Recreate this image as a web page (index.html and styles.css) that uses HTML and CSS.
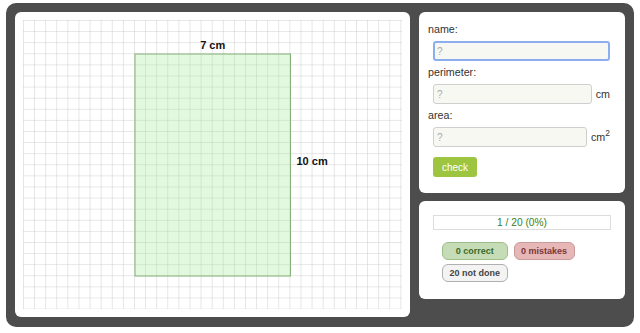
FILE: index.html
```html
<!DOCTYPE html>
<html lang="en">
<head>
    <meta charset="UTF-8">
    <meta name="viewport" content="width=device-width, initial-scale=1.0">
    <title>Rectangle Quiz</title>
    <link rel="stylesheet" href="styles.css">
</head>
<body>
    <div class="frame">
        <div class="canvas-panel">
            <svg class="board" width="380" height="290" viewBox="0 0 380 290">
                <defs>
                    <pattern id="grid" width="11.1" height="11.1" patternUnits="userSpaceOnUse">
                        <path d="M 11.1 0 L 0 0 0 11.1" fill="none" stroke="#cdcdcd" stroke-width="1"/>
                    </pattern>
                </defs>
                <rect x="0" y="0" width="379" height="289" fill="url(#grid)"/>
                <rect x="112" y="34" width="155.5" height="222" class="shape"/>
                <text x="189.7" y="28.5" class="dim" text-anchor="middle">7 cm</text>
                <text x="273.5" y="145" class="dim">10 cm</text>
            </svg>
        </div>

        <div class="side">
            <div class="panel quiz">
                <label for="name">name:</label>
                <div class="field">
                    <input type="text" id="name" class="focused" placeholder="?">
                </div>
                <label for="perimeter">perimeter:</label>
                <div class="field">
                    <input type="text" id="perimeter" placeholder="?">
                    <span class="unit">cm</span>
                </div>
                <label for="area">area:</label>
                <div class="field">
                    <input type="text" id="area" placeholder="?">
                    <span class="unit">cm<sup>2</sup></span>
                </div>
                <button class="check">check</button>
            </div>

            <div class="panel score">
                <div class="progress">1 / 20 (0%)</div>
                <div class="badges">
                    <span class="badge correct">0 correct</span>
                    <span class="badge mistakes">0 mistakes</span>
                    <span class="badge todo">20 not done</span>
                </div>
            </div>
        </div>
    </div>
</body>
</html>
```

FILE: styles.css
```css
* {
    box-sizing: border-box;
}

body {
    margin: 0;
    font-family: 'Liberation Sans', Arial, sans-serif;
    background: #fff;
    color: #333;
}

.frame {
    margin: 3px 0 0 6px;
    width: 628px;
    height: 324px;
    padding: 9px;
    background: #4d4d4d;
    border-radius: 10px;
    display: flex;
    gap: 9px;
    align-items: flex-start;
}

.canvas-panel {
    width: 395px;
    height: 305px;
    padding: 8px;
    background: #fff;
    border-radius: 6px;
}

.board {
    display: block;
}

.shape {
    fill: rgba(150, 230, 140, 0.28);
    stroke: #86b27a;
    stroke-width: 1;
}

.dim {
    font-family: 'Liberation Sans', Arial, sans-serif;
    font-size: 11px;
    font-weight: bold;
    fill: #111;
}

.side {
    width: 206px;
    display: flex;
    flex-direction: column;
    gap: 8px;
}

.panel {
    background: #fff;
    border-radius: 6px;
}

.quiz {
    height: 181px;
    padding: 9px 9px 0;
}

label {
    display: block;
    font-size: 10.7px;
    line-height: 16px;
    color: #333;
}

.field {
    display: flex;
    align-items: center;
    gap: 4px;
    width: 177px;
    margin: 4px 0 3px 5px;
    font-size: 10.7px;
    color: #333;
}

input {
    flex: 1;
    min-width: 0;
    height: 20px;
    padding: 0 3px;
    border: 1px solid #cfcfcf;
    border-radius: 3px;
    background: #f8f8f2;
    font-family: inherit;
    font-size: 10px;
    color: #333;
    outline: none;
}

input::placeholder {
    color: #aaa;
}

input.focused {
    border: 2px solid #8caef0;
    padding: 0 2px;
}

.unit sup {
    font-size: 8.5px;
    line-height: 0;
}

.check {
    display: block;
    margin: 10px 0 0 5px;
    height: 20px;
    padding: 0 9px;
    border: none;
    border-radius: 3px;
    background: #9dc540;
    color: #fff;
    font-family: inherit;
    font-size: 10px;
}

.score {
    height: 98px;
    padding: 14px 14px 0;
}

.progress {
    height: 15px;
    border: 1px solid #ddd;
    text-align: center;
    font-size: 10.2px;
    line-height: 13px;
    color: #2f8424;
}

.badges {
    display: grid;
    grid-template-columns: auto auto;
    justify-content: start;
    gap: 4px 6px;
    margin: 12px 0 0 9px;
}

.badge {
    height: 18px;
    padding: 0 6.5px;
    border: 1px solid;
    border-radius: 6px;
    font-size: 9px;
    font-weight: bold;
    line-height: 16px;
    text-align: center;
}

.correct {
    background: #c6dcb6;
    border-color: #9fbf8a;
    color: #3a6a2a;
}

.mistakes {
    background: #e7b6b6;
    border-color: #c79b9b;
    color: #7a3838;
}

.todo {
    background: #f3f3f3;
    border-color: #b0b0b0;
    color: #444;
}
```
